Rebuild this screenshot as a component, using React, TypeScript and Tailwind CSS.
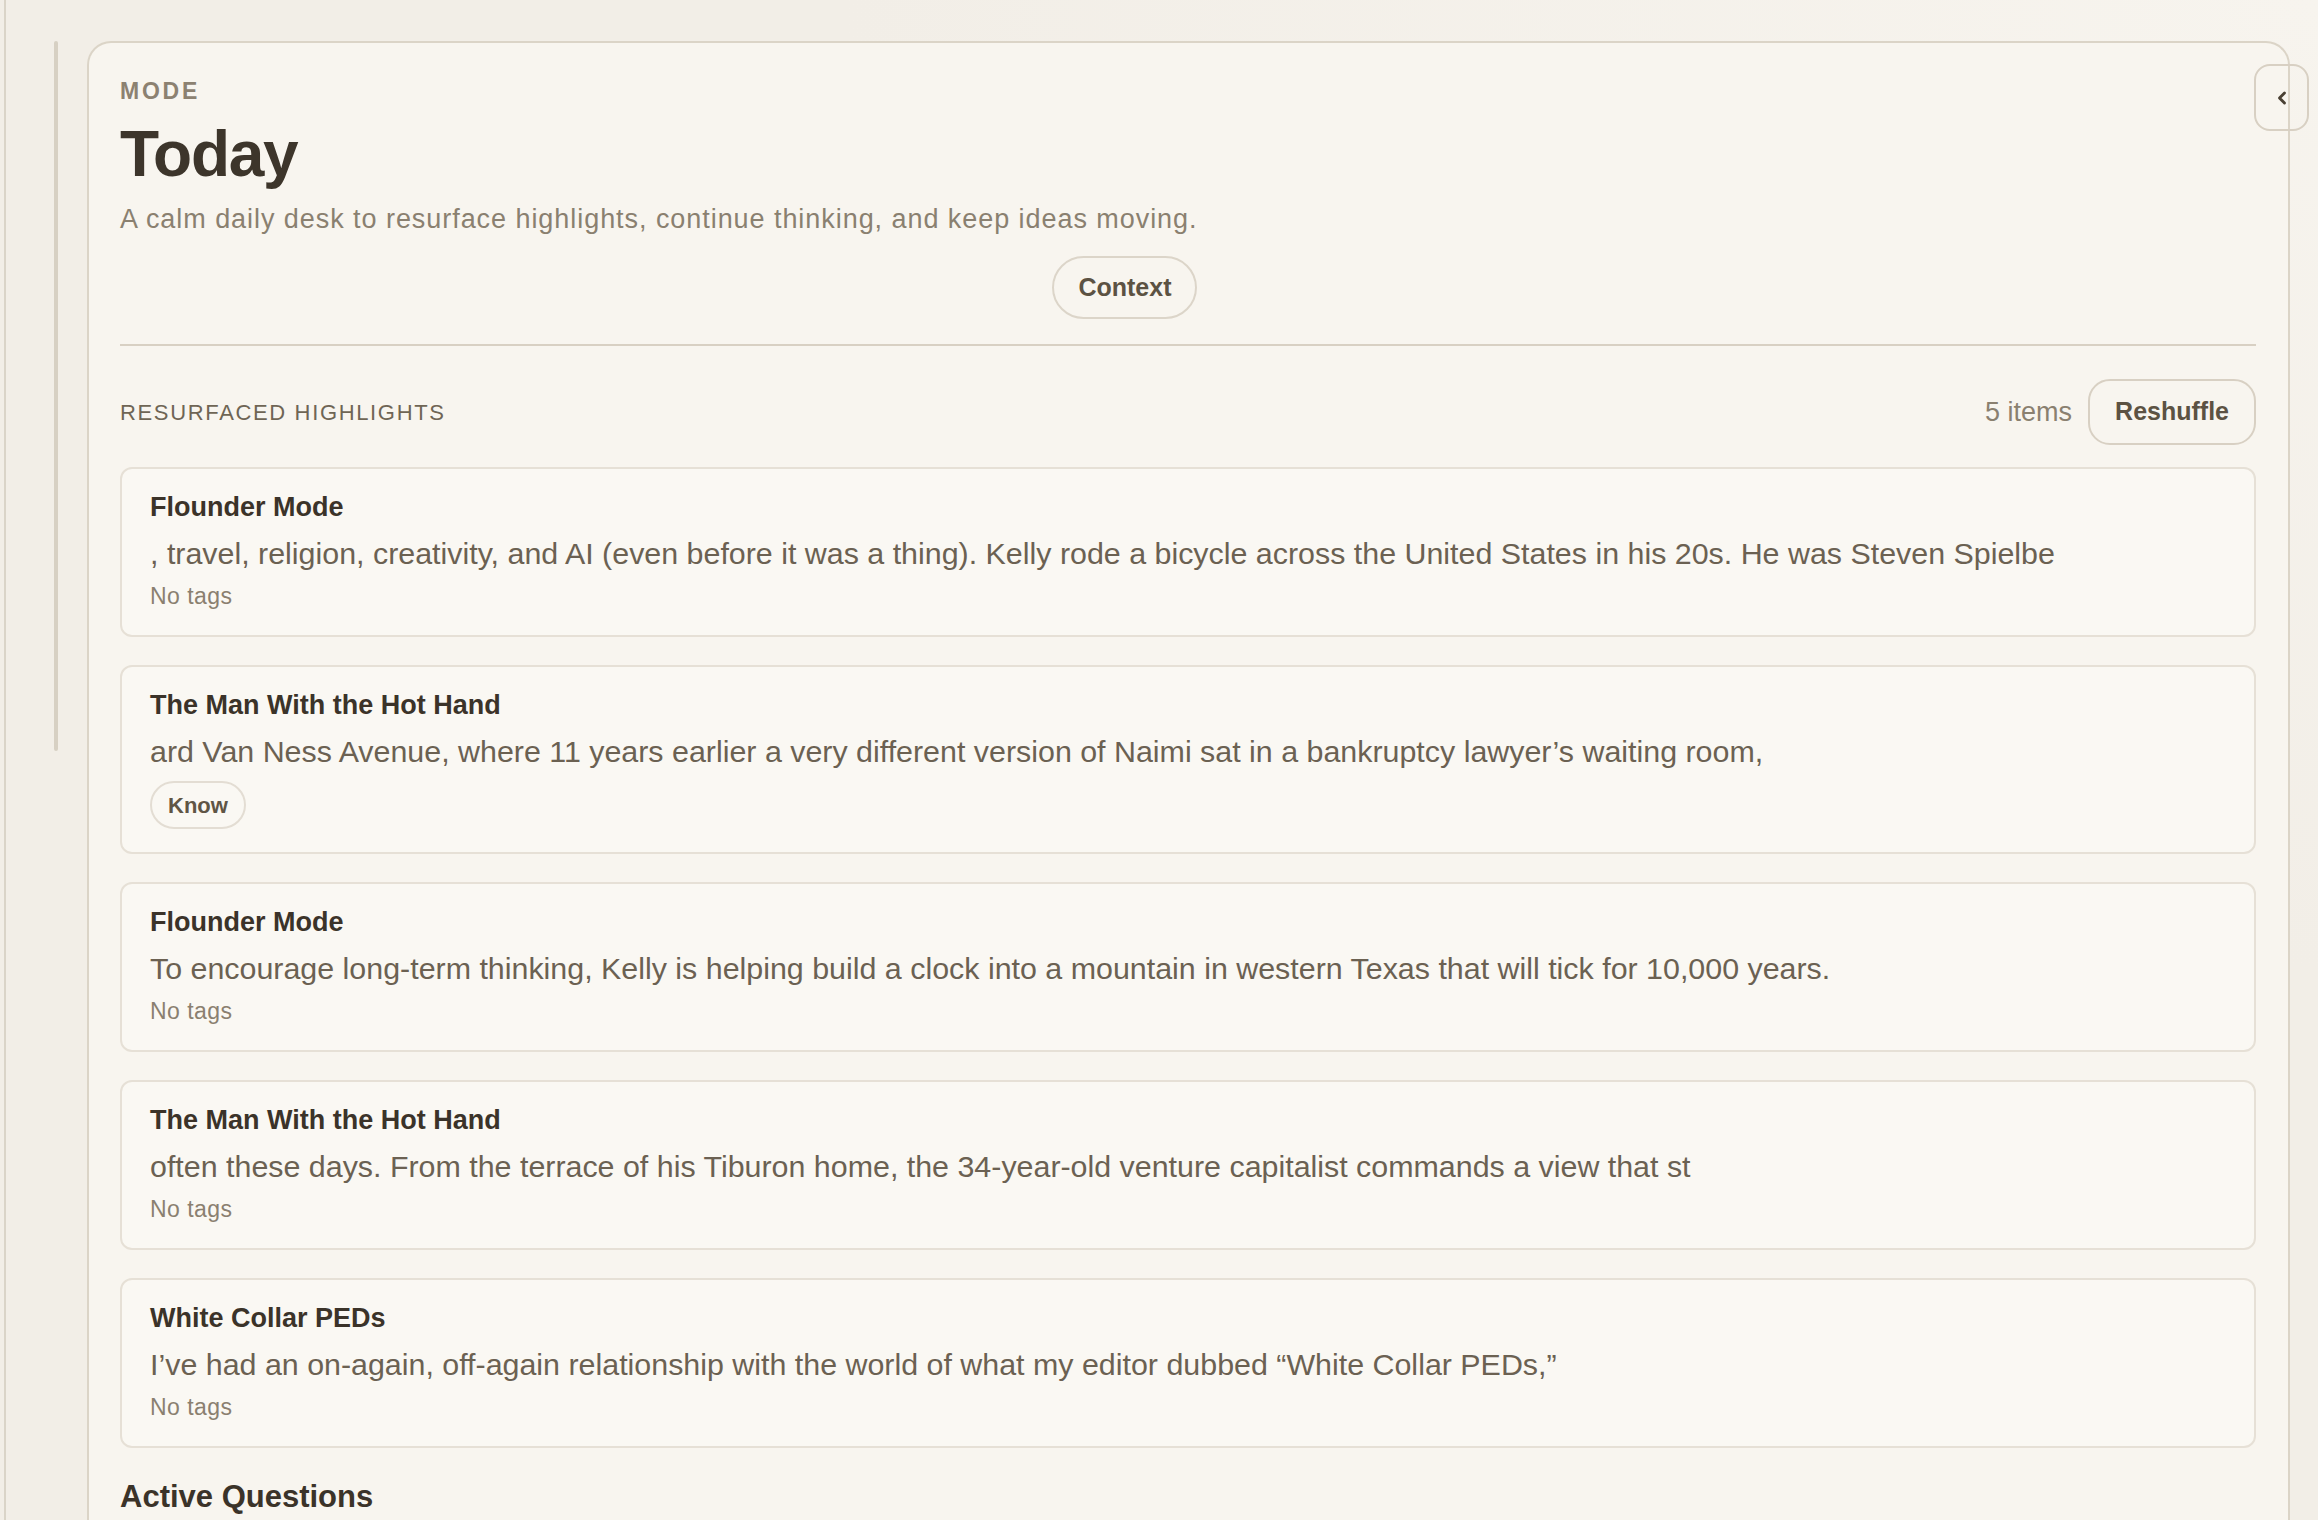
import { ChevronLeft } from 'lucide-react';

interface Highlight {
  title: string;
  text: string;
  tags: string[];
}

const highlights: Highlight[] = [
  {
    title: 'Flounder Mode',
    text: ', travel, religion, creativity, and AI (even before it was a thing). Kelly rode a bicycle across the United States in his 20s. He was Steven Spielbe',
    tags: [],
  },
  {
    title: 'The Man With the Hot Hand',
    text: 'ard Van Ness Avenue, where 11 years earlier a very different version of Naimi sat in a bankruptcy lawyer’s waiting room,',
    tags: ['Know'],
  },
  {
    title: 'Flounder Mode',
    text: 'To encourage long-term thinking, Kelly is helping build a clock into a mountain in western Texas that will tick for 10,000 years.',
    tags: [],
  },
  {
    title: 'The Man With the Hot Hand',
    text: 'often these days. From the terrace of his Tiburon home, the 34-year-old venture capitalist commands a view that st',
    tags: [],
  },
  {
    title: 'White Collar PEDs',
    text: 'I’ve had an on-again, off-again relationship with the world of what my editor dubbed “White Collar PEDs,”',
    tags: [],
  },
];

export default function App() {
  return (
    <div className="h-screen overflow-hidden bg-[#f2eee7] bg-[radial-gradient(ellipse_at_top_right,#f7f4ee_0%,#f2eee7_45%)] pl-[4px] font-['Liberation_Sans',Arial,sans-serif] antialiased">
      <div className="flex h-full border-l-2 border-[#dad4c8]">
        {/* collapsed rail */}
        <div className="w-[81px] shrink-0 pl-[48px] pt-[41px]">
          <div className="h-[710px] w-[4px] rounded-full bg-[#d7d0c3]" />
        </div>

        <main className="relative mr-[28px] mt-[41px] flex-1 rounded-t-[24px] border-2 border-b-0 border-[#dbd4c7] bg-[#f8f5ef] pl-[31px] pr-[32px] pt-[34px]">
          <button className="absolute -right-[21px] top-[21px] flex h-[67px] w-[55px] items-center justify-center rounded-[16px] border-2 border-[#d8d0c3] text-[#4a4134]">
            <ChevronLeft className="h-[20px] w-[20px]" strokeWidth={3.5} />
          </button>

          {/* header */}
          <div className="w-fit">
            <p className="text-[23px] font-bold uppercase leading-[28px] tracking-[0.12em] text-[#8c8171]">Mode</p>
            <h1 className="mt-[13px] text-[64px] font-bold leading-[72px] tracking-[-0.02em] text-[#3d352b]">Today</h1>
            <p className="mt-[11px] text-[27px] leading-[36px] tracking-[0.035em] text-[#8a8070]">
              A calm daily desk to resurface highlights, continue thinking, and keep ideas moving.
            </p>
            <div className="mt-[19px] flex justify-end">
              <button className="h-[63px] rounded-full border-2 border-[#dcd5c9] px-[24px] text-[25px] font-bold text-[#5c5243]">
                Context
              </button>
            </div>
          </div>

          <div className="mt-[25px] h-[2px] bg-[#d8d0c3]" />

          {/* resurfaced highlights */}
          <div className="mt-[33px] flex items-center justify-between">
            <h2 className="text-[22px] uppercase tracking-[0.075em] text-[#6f6555]">Resurfaced Highlights</h2>
            <div className="flex items-center gap-[16px]">
              <span className="text-[27px] text-[#8a8070]">5 items</span>
              <button className="h-[66px] rounded-[22px] border-2 border-[#d8d0c3] px-[25px] text-[25px] font-bold text-[#5c5243]">
                Reshuffle
              </button>
            </div>
          </div>

          <div className="mt-[22px] flex flex-col gap-[28px]">
            {highlights.map((h, i) => (
              <div key={i} className="rounded-[12px] border-2 border-[#e6e0d6] bg-[#faf8f3] px-[28px] pb-[23px] pt-[22px]">
                <h3 className="text-[27px] font-bold leading-[32px] text-[#3b3329]">{h.title}</h3>
                <p className="mt-[10px] whitespace-nowrap text-[30.4px] leading-[40px] text-[#6b6152]">{h.text}</p>
                {h.tags.length === 0 ? (
                  <p className="mt-[8px] text-[23px] leading-[31px] tracking-[0.02em] text-[#8a8070]">No tags</p>
                ) : (
                  <div className="mt-[10px] flex gap-2">
                    {h.tags.map((t) => (
                      <span
                        key={t}
                        className="flex h-[48px] items-center rounded-full border-2 border-[#e3ddd3] px-[16px] text-[22px] font-bold text-[#5f5545]"
                      >
                        {t}
                      </span>
                    ))}
                  </div>
                )}
              </div>
            ))}
          </div>

          <h2 className="mt-[29px] text-[31px] font-bold leading-[40px] text-[#3b3329]">Active Questions</h2>
        </main>
      </div>
    </div>
  );
}
